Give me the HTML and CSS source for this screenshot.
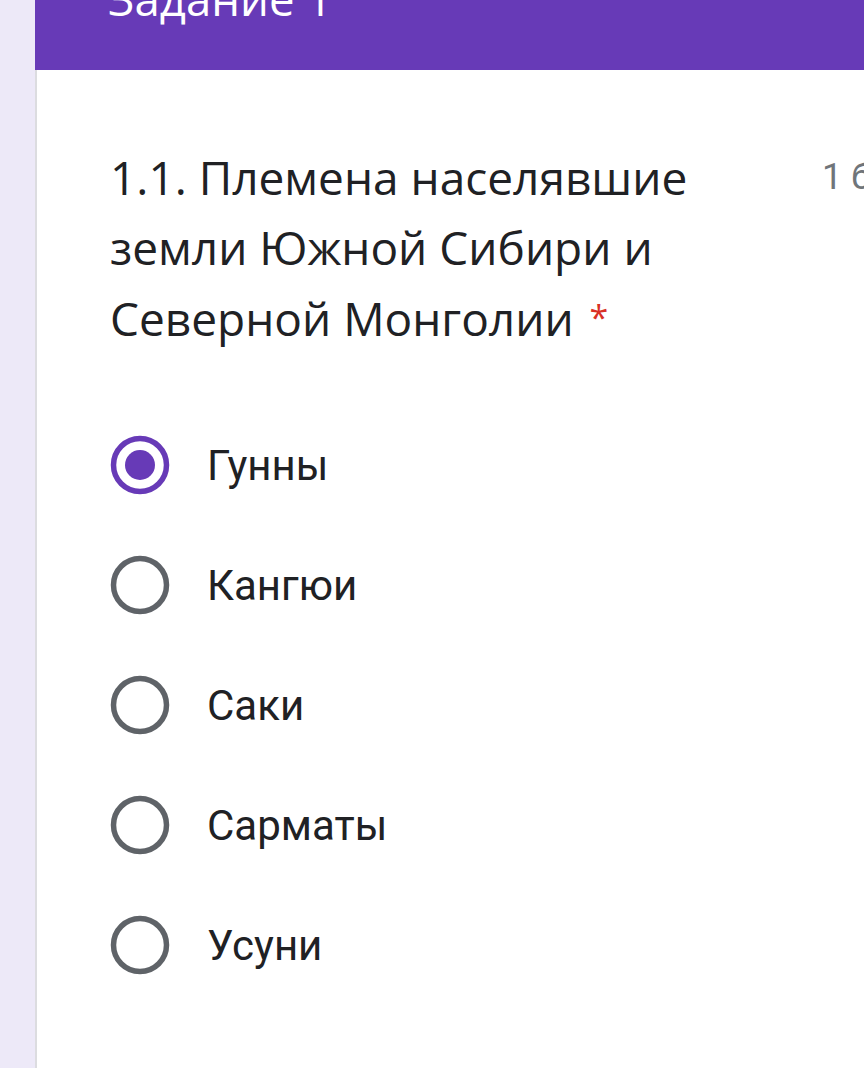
FILE: index.html
```html
<!DOCTYPE html>
<html lang="ru">
<head>
<meta charset="utf-8">
<title>Задание 1</title>
<link rel="stylesheet" href="styles.css">
</head>
<body>
<div class="page">
  <header class="section-head">
    <div class="section-title">Задание 1</div>
  </header>
  <main class="card">
    <div class="q-head">
      <div class="q-title">1.1. Племена населявшие земли Южной Сибири и Северной Монголии <span class="req">*</span></div>
      <div class="q-points">1 балл</div>
    </div>
    <div class="options">
      <label class="option">
        <svg class="radio" viewBox="0 0 60 60" width="60" height="60"><circle cx="30" cy="30" r="26.5" fill="none" stroke="#673ab7" stroke-width="5.5"/><circle cx="30" cy="30" r="15" fill="#673ab7"/></svg>
        <span class="opt-text">Гунны</span>
      </label>
      <label class="option">
        <svg class="radio" viewBox="0 0 60 60" width="60" height="60"><circle cx="30" cy="30" r="26.5" fill="none" stroke="#5f6368" stroke-width="5.5"/></svg>
        <span class="opt-text">Кангюи</span>
      </label>
      <label class="option">
        <svg class="radio" viewBox="0 0 60 60" width="60" height="60"><circle cx="30" cy="30" r="26.5" fill="none" stroke="#5f6368" stroke-width="5.5"/></svg>
        <span class="opt-text">Саки</span>
      </label>
      <label class="option">
        <svg class="radio" viewBox="0 0 60 60" width="60" height="60"><circle cx="30" cy="30" r="26.5" fill="none" stroke="#5f6368" stroke-width="5.5"/></svg>
        <span class="opt-text">Сарматы</span>
      </label>
      <label class="option">
        <svg class="radio" viewBox="0 0 60 60" width="60" height="60"><circle cx="30" cy="30" r="26.5" fill="none" stroke="#5f6368" stroke-width="5.5"/></svg>
        <span class="opt-text">Усуни</span>
      </label>
    </div>
  </main>
</div>
</body>
</html>
```
FILE: styles.css
```css
html, body {
  margin: 0;
  padding: 0;
}
body {
  background: #ede9f8;
  overflow: hidden;
  width: 864px;
  height: 1068px;
}
.page {
  margin-left: 35px;
  width: 900px;
}
.section-head {
  background: #673ab7;
  height: 70px;
  overflow: hidden;
  padding-left: 73px;
}
.section-title {
  font-family: "Open Sans", "Noto Sans", sans-serif;
  color: #ffffff;
  font-size: 45.5px;
  line-height: 48px;
  margin-top: -26px;
  white-space: nowrap;
}
.card {
  background: #ffffff;
  border-left: 2px solid #dcdce0;
  border-bottom-left-radius: 10px;
  padding: 72px 0 90px 73px;
}
.q-head {
  display: flex;
  align-items: flex-start;
}
.q-title {
  flex: 0 0 610px;
  font-family: "Open Sans", "Noto Sans", sans-serif;
  font-size: 46px;
  line-height: 70px;
  color: #202124;
}
.req {
  color: #d93025;
  font-size: 34px;
  margin-left: 4px;
  vertical-align: 6px;
}
.q-points {
  font-family: Roboto, "Noto Sans", sans-serif;
  font-size: 36px;
  line-height: 70px;
  color: #70757a;
  padding-left: 102px;
  white-space: nowrap;
}
.options {
  margin-top: 52px;
  display: flex;
  flex-direction: column;
}
.option {
  display: flex;
  align-items: center;
  height: 120px;
  gap: 37px;
}
.radio {
  flex: 0 0 60px;
  display: block;
}
.opt-text {
  font-family: Roboto, "Noto Sans", sans-serif;
  font-size: 42px;
  color: #202124;
}
```
